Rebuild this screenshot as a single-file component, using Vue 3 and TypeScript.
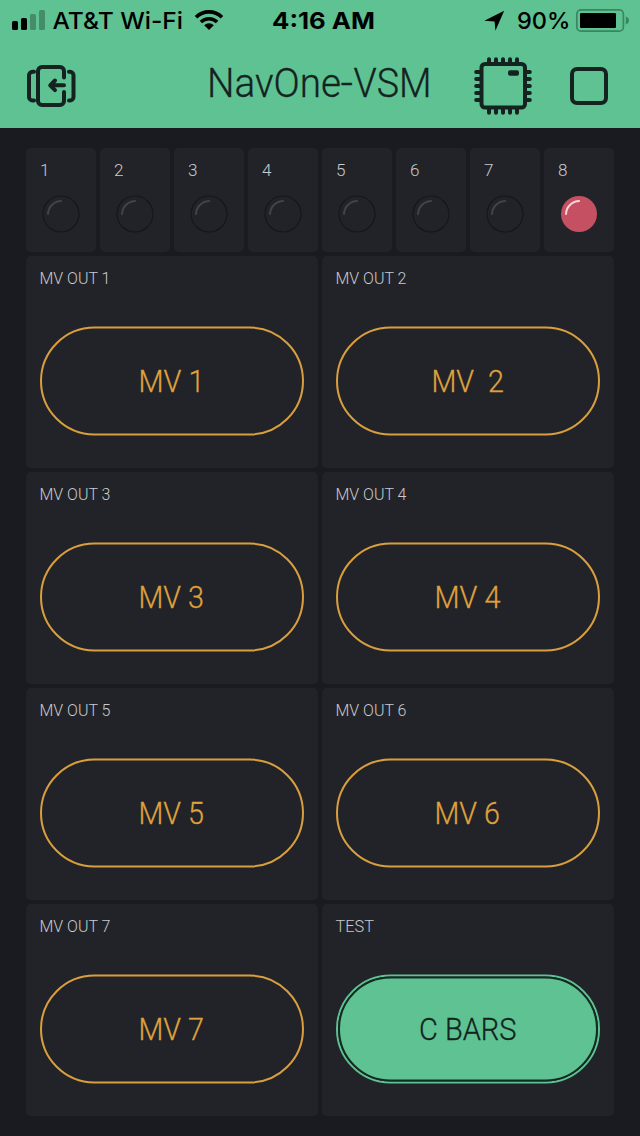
<script setup lang="ts">
interface Indicator {
  id: number
  on: boolean
}

interface Output {
  label: string
  labelWidth: number
  text: string
  textX: number
  textWidth: number
  active?: boolean
}

const indicators: Indicator[] = Array.from({ length: 8 }, (_, i) => ({ id: i + 1, on: i === 7 }))

const outputs: Output[] = [
  { label: 'MV OUT 1', labelWidth: 71, text: 'MV 1', textX: 98.5, textWidth: 66 },
  { label: 'MV OUT 2', labelWidth: 71, text: 'MV\u00a0\u00a02', textX: 95.5, textWidth: 72.5 },
  { label: 'MV OUT 3', labelWidth: 71, text: 'MV 3', textX: 98.5, textWidth: 65.5 },
  { label: 'MV OUT 4', labelWidth: 71, text: 'MV 4', textX: 98.5, textWidth: 66 },
  { label: 'MV OUT 5', labelWidth: 71, text: 'MV 5', textX: 98.5, textWidth: 65.5 },
  { label: 'MV OUT 6', labelWidth: 71, text: 'MV 6', textX: 98.5, textWidth: 65.5 },
  { label: 'MV OUT 7', labelWidth: 71, text: 'MV 7', textX: 98.5, textWidth: 65.5 },
  { label: 'TEST', labelWidth: 38.5, text: 'C BARS', textX: 83, textWidth: 97.5, active: true },
]

const pinOffsets: number[] = [16, 23, 30, 37, 44]
</script>

<template>
  <div class="screen">
    <header class="header">
      <svg class="status" width="640" height="44" viewBox="0 0 640 44">
        <rect x="12" y="21" width="6" height="9" rx="1.5" />
        <rect x="21" y="18" width="6" height="12" rx="1.5" />
        <rect class="dim" x="30" y="14" width="6" height="16" rx="1.5" />
        <rect class="dim" x="39" y="10" width="6" height="20" rx="1.5" />
        <text class="carrier" x="52.5" y="29" textLength="130.500" lengthAdjust="spacingAndGlyphs">AT&amp;T Wi-Fi</text>
        <g class="wifi">
          <path d="M196 17.2a18.6 18.6 0 0 1 26 0" />
          <path d="M200.9 22a11.6 11.6 0 0 1 16.2 0" />
        </g>
        <path d="M209 30l-4.8-4.8a6.8 6.8 0 0 1 9.6 0z" />
        <text class="time" x="272" y="29" textLength="103" lengthAdjust="spacingAndGlyphs">4:16 AM</text>
        <path d="M484.3 20.7L504.2 10.8L495.4 30.8L494.6 21.5z" />
        <text class="carrier" x="517" y="29" textLength="53.5" lengthAdjust="spacingAndGlyphs">90%</text>
        <rect class="battery" x="576.8" y="9.8" width="46.6" height="21.4" rx="4.2" />
        <rect x="580" y="13" width="36" height="15" rx="1.2" />
        <path class="nub" d="M625.8 16.5q3.2 1.2 3.2 4t-3.2 4z" />
      </svg>
      <div class="nav">
        <svg class="exit" width="52" height="46" viewBox="0 0 52 46">
          <path d="M39 14.5V8a4 4 0 0 0-4-4H17a4 4 0 0 0-4 4v30a4 4 0 0 0 4 4h18a4 4 0 0 0 4-4v-9" />
          <path d="M9 8.8H7.500a3.500 3.500 0 0 0-3.500 3.500v21.600a3.500 3.500 0 0 0 3.500 3.500H9M44 8.800H45a3.500 3.500 0 0 1 3.500 3.500v21.600a3.500 3.500 0 0 1-3.500 3.500h-1" />
          <path d="M39 22.300H26M30 17.500l-4.800 4.800L30 27.100" />
        </svg>
        <svg class="title" width="226" height="56" viewBox="0 0 226 56">
          <text y="43"><tspan x="0" textLength="134" lengthAdjust="spacingAndGlyphs">NavOne</tspan><tspan x="133.500" textLength="12.500" lengthAdjust="spacingAndGlyphs">-</tspan><tspan x="146.500" textLength="78" lengthAdjust="spacingAndGlyphs">VSM</tspan></text>
        </svg>
        <svg class="chip" width="60" height="60" viewBox="0 0 60 60">
          <g class="pins">
            <path
              v-for="p in pinOffsets"
              :key="p"
              :d="`M${p} 3.200v4M${p} 52.800v4M3.200 ${p}h4M52.800 ${p}h4`"
            />
          </g>
          <rect class="body" x="8.500" y="8" width="43.500" height="43.500" rx="3.500" />
          <rect class="pip" x="35" y="14.300" width="11" height="5.500" rx="2" />
        </svg>
        <svg class="stop" width="40" height="40" viewBox="0 0 40 40">
          <rect x="3" y="3" width="34" height="34" rx="5" />
        </svg>
      </div>
    </header>

    <main class="board">
      <section class="leds">
        <div v-for="led in indicators" :key="led.id" class="tile led">
          <svg width="70" height="104" viewBox="0 0 70 104">
            <text class="label" x="14" y="28.300" textLength="9.500" lengthAdjust="spacingAndGlyphs">{{ led.id }}</text>
            <circle class="lamp" :class="{ lit: led.on }" cx="35" cy="66" r="18" />
            <path class="shine" :class="{ lit: led.on }" d="M22 66.800A13.500 13.500 0 0 1 35.800 53" />
          </svg>
        </div>
      </section>
      <section class="outputs">
        <div v-for="out in outputs" :key="out.label" class="tile output">
          <svg class="caption" width="264" height="32" viewBox="0 0 264 32">
            <text class="label" x="-0.500" y="28.300" :textLength="out.labelWidth" lengthAdjust="spacingAndGlyphs">{{ out.label }}</text>
          </svg>
          <button class="pill" :class="{ active: out.active }" type="button">
            <svg width="264" height="110" viewBox="0 0 264 110">
              <rect class="ring" x="1" y="1.500" width="262" height="107" rx="53.500" />
              <rect v-if="out.active" class="core" x="3" y="3.500" width="258" height="103" rx="51.500" />
              <text :x="out.textX" y="66" :textLength="out.textWidth" lengthAdjust="spacingAndGlyphs">{{ out.text }}</text>
            </svg>
          </button>
        </div>
      </section>
    </main>
  </div>
</template>

<style>
body {
  margin: 0;
  background: #1a1b20;
}
</style>

<style scoped>
.screen {
  width: 640px;
  height: 1136px;
  overflow: hidden;
  background: #1a1b20;
  font-family: Roboto, "Liberation Sans", sans-serif;
  font-weight: 300;
}

svg {
  display: block;
  flex: none;
  overflow: visible;
}

.header {
  height: 128px;
  background: #5fc292;
}

.status {
  fill: #000;
}

.status text {
  font-family: Inter, "Liberation Sans", sans-serif;
  font-size: 23.5px;
}

.carrier {
  font-weight: 500;
}

.time {
  font-weight: 700;
}

.dim {
  opacity: 0.27;
}

.wifi {
  fill: none;
  stroke: #000;
  stroke-width: 3.6;
}

.battery {
  fill: none;
  stroke: #39875f;
  stroke-width: 1.7;
}

.nub {
  fill: #39875f;
}

.nav {
  display: flex;
  align-items: center;
  height: 84px;
  padding-left: 25px;
}

.exit {
  fill: none;
  stroke: #14231f;
  stroke-width: 4;
  stroke-linecap: round;
  stroke-linejoin: round;
}

.title {
  margin-left: 130px;
  margin-top: -8px;
  fill: #14231f;
  stroke: #14231f;
  stroke-width: 0.3;
  font-size: 40.5px;
}

.chip {
  margin-left: 40px;
}

.pins {
  fill: none;
  stroke: #14231f;
  stroke-width: 4;
  stroke-linecap: round;
}

.body {
  fill: none;
  stroke: #14231f;
  stroke-width: 4;
}

.pip {
  fill: #14231f;
}

.stop {
  margin-left: 36px;
  fill: none;
  stroke: #14231f;
  stroke-width: 4;
}

.board {
  display: flex;
  flex-direction: column;
  gap: 4px;
  padding: 20px 26px;
}

.leds {
  display: grid;
  grid-template-columns: repeat(8, 70px);
  gap: 4px;
}

.outputs {
  display: grid;
  grid-template-columns: repeat(2, 292px);
  gap: 4px;
}

.tile {
  border-radius: 5px;
  background: #222328;
}

.led {
  height: 104px;
}

.output {
  display: flex;
  flex-direction: column;
  align-items: center;
  gap: 38px;
  height: 212px;
}

.label {
  fill: #c9cacd;
  font-size: 17.3px;
}

.lamp {
  fill: #222328;
  stroke: #16171b;
  stroke-width: 1.2;
}

.lamp.lit {
  fill: #c55062;
  stroke: none;
}

.shine {
  fill: none;
  stroke: #424347;
  stroke-width: 2;
}

.shine.lit {
  stroke: #f8d5d9;
}

.pill {
  display: block;
  padding: 0;
  border: 0;
  background: none;
  font: inherit;
}

.pill text {
  fill: #dfa13c;
  stroke: #dfa13c;
  stroke-width: 0.3;
  font-size: 31px;
}

.ring {
  fill: none;
  stroke: #d99e3e;
  stroke-width: 2;
}

.active .ring {
  stroke: #5fc292;
}

.core {
  fill: #5fc292;
  stroke: #142b23;
  stroke-width: 2;
}

.pill.active text {
  fill: #12251e;
  stroke: #12251e;
}
</style>
